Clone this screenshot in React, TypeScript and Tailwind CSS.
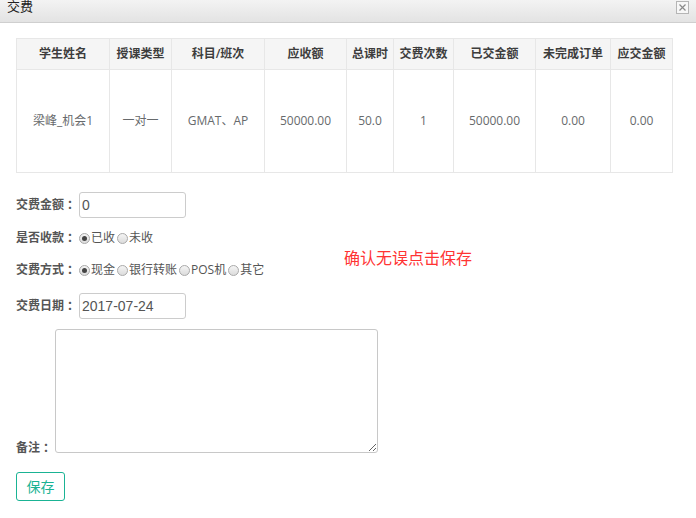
import { useState } from "react";

const cols = [
  { title: "学生姓名", w: "w-[93px]", value: "梁峰_机会1" },
  { title: "授课类型", w: "w-[62px]", value: "一对一" },
  { title: "科目/班次", w: "w-[93px]", value: "GMAT、AP" },
  { title: "应收额", w: "w-[82px]", value: "50000.00" },
  { title: "总课时", w: "w-[47px]", value: "50.0" },
  { title: "交费次数", w: "w-[60px]", value: "1" },
  { title: "已交金额", w: "w-[82px]", value: "50000.00" },
  { title: "未完成订单", w: "w-[75px]", value: "0.00" },
  { title: "应交金额", w: "w-[62px]", value: "0.00" },
];

function Label({ text }: { text: string }) {
  return (
    <span className="flex shrink-0 whitespace-nowrap text-[12px] font-bold text-[#555]">
      {text}
      <span className="ml-[3px] w-[12px]">：</span>
    </span>
  );
}

function Radio({ checked, label, onClick }: { checked: boolean; label: string; onClick: () => void }) {
  return (
    <button type="button" onClick={onClick} className="flex items-center gap-[1px] whitespace-nowrap text-[12px] text-[#555]">
      <span className="flex h-[11px] w-[11px] items-center justify-center rounded-full border border-[#a9a9a9] bg-gradient-to-b from-[#f4f4f4] to-[#dcdcdc]">
        {checked && <span className="h-[5px] w-[5px] rounded-full bg-[#444]" />}
      </span>
      {label}
    </button>
  );
}

export default function App() {
  const [paid, setPaid] = useState("已收");
  const [method, setMethod] = useState("现金");

  return (
    <div
      className="h-[518px] w-[696px] overflow-hidden bg-white"
      style={{ fontFamily: '"Open Sans", "Noto Sans CJK SC", sans-serif' }}
    >
      {/* title bar */}
      <div className="flex h-[23px] items-start justify-between border-b border-[#cfcfcf] bg-gradient-to-b from-[#f3f3f3] to-[#e3e3e3] pl-[7px] pr-[7px]">
        <span className="mt-[-2px] text-[13px] leading-[17px] text-[#222]">交费</span>
        <button
          type="button"
          aria-label="关闭"
          className="mt-[1px] flex h-[13px] w-[13px] items-center justify-center border border-[#b5b5b5] bg-[#f7f7f7]"
        >
          <svg width="9" height="9" viewBox="0 0 9 9">
            <path d="M1.5 1.5 L7.5 7.5 M7.5 1.5 L1.5 7.5" stroke="#8a8a8a" strokeWidth="1.2" />
          </svg>
        </button>
      </div>

      <div className="px-4 pt-[15px]">
        <table className="border-collapse text-[12px]">
          <thead>
            <tr className="h-[31px] bg-[#f5f5f5]">
              {cols.map((c) => (
                <th key={c.title} className={`${c.w} border border-[#e7e7e7] p-0 text-center font-semibold text-[#3d3d3d]`}>
                  {c.title}
                </th>
              ))}
            </tr>
          </thead>
          <tbody>
            <tr className="h-[103px]">
              {cols.map((c) => (
                <td key={c.title} className="border border-[#e7e7e7] p-0 text-center text-[#676a6c]">
                  {c.value}
                </td>
              ))}
            </tr>
          </tbody>
        </table>

        <div className="mt-[19px] flex">
          <div className="flex w-[328px] flex-col">
            <div className="flex h-[26px] items-center">
              <Label text="交费金额" />
              <input
                defaultValue="0"
                className="h-[26px] w-[107px] rounded-[3px] border border-[#ccc] px-[2px] text-[14px] text-[#555] outline-none"
                style={{ fontFamily: '"Liberation Sans", Arial, sans-serif' }}
              />
            </div>
            <div className="mt-[10px] flex h-[20px] items-center">
              <Label text="是否收款" />
              <div className="flex gap-[2px]">
                {["已收", "未收"].map((o) => (
                  <Radio key={o} label={o} checked={paid === o} onClick={() => setPaid(o)} />
                ))}
              </div>
            </div>
            <div className="mt-[12px] flex h-[20px] items-center">
              <Label text="交费方式" />
              <div className="flex gap-[2px]">
                {["现金", "银行转账", "POS机", "其它"].map((o) => (
                  <Radio key={o} label={o} checked={method === o} onClick={() => setMethod(o)} />
                ))}
              </div>
            </div>
            <div className="mt-[13px] flex h-[26px] items-center">
              <Label text="交费日期" />
              <input
                defaultValue="2017-07-24"
                className="h-[26px] w-[107px] rounded-[3px] border border-[#ccc] px-[2px] text-[14px] text-[#555] outline-none"
                style={{ fontFamily: '"Liberation Sans", Arial, sans-serif' }}
              />
            </div>
          </div>
          <div className="pt-[55px] text-[16px] leading-[22px] text-[#ff3333]">确认无误点击保存</div>
        </div>

        <div className="mt-[10px] flex items-end">
          <span className="translate-y-[4px]">
            <Label text="备注" />
          </span>
          <textarea className="h-[124px] w-[323px] rounded-[3px] border border-[#c8c8c8] outline-none" />
        </div>

        <button
          type="button"
          className="mt-[19px] h-[29px] w-[49px] rounded-[3px] border border-[#1ab394] bg-white text-[14px] text-[#1ab394]"
        >
          保存
        </button>
      </div>
    </div>
  );
}
